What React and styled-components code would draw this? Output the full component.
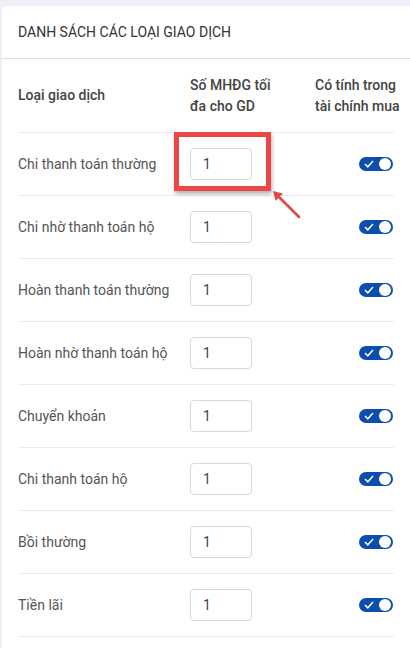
import React from 'react';
import styled, { createGlobalStyle } from 'styled-components';

const GlobalStyle = createGlobalStyle`
  html, body {
    margin: 0;
    padding: 0;
    background: #eef0f5;
    font-family: Roboto, "Noto Sans", Arial, sans-serif;
    overflow: hidden;
  }
`;

const rows = [
  'Chi thanh toán thường',
  'Chi nhờ thanh toán hộ',
  'Hoàn thanh toán thường',
  'Hoàn nhờ thanh toán hộ',
  'Chuyển khoản',
  'Chi thanh toán hộ',
  'Bồi thường',
  'Tiền lãi',
];

const Page = styled.div`
  padding: 6px 0 0 2px;
  height: 642px;
  overflow: hidden;
`;

const Card = styled.section`
  background: #ffffff;
  border-radius: 5px 0 0 0;
  width: 420px;
  min-height: 700px;
`;

const CardTitle = styled.div`
  height: 52px;
  display: flex;
  align-items: center;
  padding-left: 16px;
  font-size: 14px;
  color: #333;
  border-bottom: 1px solid #dcdde2;
`;

const Table = styled.div`
  margin: 0 0 0 16px;
  width: 376px;
`;

const Row = styled.div`
  display: grid;
  grid-template-columns: 172px 125px 1fr;
  align-items: center;
  height: ${(p) => p.$height}px;
  border-bottom: 1px solid #ececef;
  box-sizing: border-box;
`;

const HeadCell = styled.div`
  font-size: 14px;
  font-weight: 500;
  color: #444;
  line-height: 21px;
  white-space: nowrap;
`;

const Label = styled.div`
  font-size: 14px;
  color: #555;
`;

const InputCell = styled.div`
  position: relative;
`;

const NumberBox = styled.div`
  width: 62px;
  height: 32px;
  box-sizing: border-box;
  border: 1px solid #d6d8dc;
  border-radius: 4px;
  display: flex;
  align-items: center;
  padding-left: 12px;
  font-size: 14px;
  color: #444;
`;

const Highlight = styled.div`
  position: absolute;
  left: -16px;
  top: -16px;
  width: 97px;
  height: 59px;
  box-sizing: border-box;
  border: 5px solid #ec4747;
  box-shadow: 1px 3px 4px rgba(0, 0, 0, 0.3);
`;

const Arrow = styled.svg`
  position: absolute;
  left: 82px;
  top: 42px;
  overflow: visible;
`;

const ToggleCell = styled.div`
  display: flex;
  justify-content: flex-end;
  padding-right: 1px;
`;

const Toggle = styled.div`
  width: 34px;
  height: 14px;
  border-radius: 7px;
  background: #0b4ead;
  display: flex;
  align-items: center;
  justify-content: space-between;
  padding: 0 2px 0 5px;
  box-sizing: border-box;
`;

const Knob = styled.div`
  width: 12px;
  height: 12px;
  border-radius: 50%;
  background: #fff;
`;

function Switch() {
  return (
    <Toggle>
      <svg width="10" height="8" viewBox="0 0 10 8">
        <path d="M1 4 L3.8 6.8 L9 1" stroke="#fff" strokeWidth="1.5" fill="none" />
      </svg>
      <Knob />
    </Toggle>
  );
}

export default function App() {
  return (
    <>
      <GlobalStyle />
      <Page>
        <Card>
          <CardTitle>DANH SÁCH CÁC LOẠI GIAO DỊCH</CardTitle>
          <Table>
            <Row $height={74}>
              <HeadCell>Loại giao dịch</HeadCell>
              <HeadCell>
                Số MHĐG tối
                <br />
                đa cho GD
              </HeadCell>
              <HeadCell>
                Có tính trong
                <br />
                tài chính mua
              </HeadCell>
            </Row>
            {rows.map((name, i) => (
              <Row key={name} $height={63}>
                <Label>{name}</Label>
                <InputCell>
                  <NumberBox>1</NumberBox>
                  {i === 0 && (
                    <>
                      <Highlight />
                      <Arrow width="30" height="30">
                        <path d="M27 27 L4 4" stroke="#e24848" strokeWidth="2.6" strokeLinecap="round" />
                        <path d="M1 1 L11 3.5 L3.5 11 Z" fill="#e24848" />
                      </Arrow>
                    </>
                  )}
                </InputCell>
                <ToggleCell>
                  <Switch />
                </ToggleCell>
              </Row>
            ))}
          </Table>
        </Card>
      </Page>
    </>
  );
}
